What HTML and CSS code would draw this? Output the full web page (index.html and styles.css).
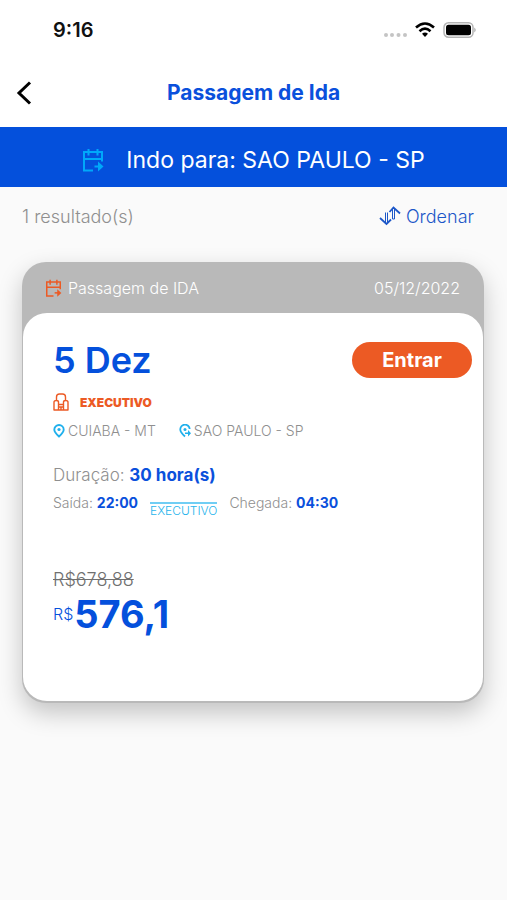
FILE: index.html
```html
<!DOCTYPE html>
<html lang="pt-BR">
<head>
<meta charset="utf-8">
<meta name="viewport" content="width=device-width, initial-scale=1">
<title>Passagem de Ida</title>
<link rel="stylesheet" href="styles.css">
</head>
<body>
<svg class="defs" aria-hidden="true">
  <symbol id="calendar" viewBox="0 0 22 24">
    <g fill="none" stroke="currentColor" stroke-width="2"><path d="M11 22.500H2V4h18v9.500M2 11h18M6.500 1v6.500M15.500 1v6.500"/><path d="M12.500 18.500H18"/></g>
    <path d="M16 13.500l5.500 5-5.500 5z" fill="currentColor"/>
  </symbol>
</svg>
<header class="top">
  <div class="status">
    <span class="clock">9:16</span>
    <div class="indicators">
      <svg width="24" height="6" viewBox="0 0 24 6" class="dots"><g fill="#c4c4c4"><circle cx="3" cy="3" r="2"/><circle cx="9" cy="3" r="2"/><circle cx="15.500" cy="3" r="2"/><circle cx="22" cy="3" r="2"/></g></svg>
      <svg width="20" height="16" viewBox="0 0 20 16"><g fill="none" stroke="#000" stroke-width="2.600"><path d="M1 5.500Q10-2.500 19 5.500"/><path d="M4.500 9.200Q10 4.200 15.500 9.200"/></g><path d="M7 11.800Q10 9.400 13 11.800L10 15z"/></svg>
      <svg width="34" height="16" viewBox="0 0 34 16"><rect x="1" y=".8" width="29" height="14.400" rx="4.500" fill="#fff" stroke="#b4b4b4" stroke-width="1.500"/><rect x="3" y="2.700" width="25" height="10.600" rx="2.500"/><path d="M31.500 5.500q2 2.500 0 5z" fill="#888"/></svg>
    </div>
  </div>
  <nav class="nav">
    <button class="back" type="button" aria-label="Voltar">
      <svg width="16" height="24" viewBox="0 0 16 24"><path d="M14 1.500L3 12l11 10.500" fill="none" stroke="#000" stroke-width="3"/></svg>
    </button>
    <h1>Passagem de Ida</h1>
  </nav>
</header>
<div class="banner">
  <svg width="22" height="24"><use href="#calendar"/></svg>
  <span>Indo para: SAO PAULO - SP</span>
</div>
<main>
  <div class="toolbar">
    <span class="count">1 resultado(s)</span>
    <button class="sort" type="button">
      <svg width="22" height="20" viewBox="0 0 22 20"><g fill="none" stroke="currentColor"><path d="M1 12l6.500 6 4.500-4.500M10.500 6l4-4.500L21 7.500" stroke-width="1.800"/><path d="M6.500 17V6.500M8.500 17V6.500M13.500 13V2.500M15.500 13V2.500M13.500 13h2" stroke-width="1"/></g></svg>
      Ordenar
    </button>
  </div>
  <article class="card">
    <div class="card-head">
      <svg width="17" height="18"><use href="#calendar"/></svg>
      <span>Passagem de IDA</span>
      <time datetime="2022-12-05">05/12/2022</time>
    </div>
    <div class="card-body">
      <div class="title-row">
        <h2>5 Dez</h2>
        <button class="enter" type="button">Entrar</button>
      </div>
      <div class="service">
        <svg width="16" height="18" viewBox="0 0 16 18"><g fill="none" stroke="currentColor" stroke-width="1.400" stroke-linejoin="round"><path d="M3.500 8V4q0-3 3-3h3q3 0 3 3v4M5.500 11.500V9q0-1.500-2.300-1.500T1 9.500V17h4.500zM10.500 11.500V9q0-1.500 2.300-1.500T15 9.500V17h-4.500zM5.500 11.500h5M5.500 14h5M8 14v3M5.500 17h5"/></g></svg>
        <strong>EXECUTIVO</strong>
      </div>
      <div class="places">
        <span class="place"><svg width="12" height="14" viewBox="0 0 12 14"><path d="M6 12.500C3 9.700 1.300 7.800 1.300 5.700a4.700 4.700 0 0 1 9.400 0C10.700 7.800 9 9.700 6 12.500z" fill="none" stroke="currentColor" stroke-width="1.900"/><circle cx="6" cy="5.500" r="1.600" fill="currentColor"/></svg>CUIABA - MT</span>
        <span class="place"><svg width="12" height="14" viewBox="0 0 12 14"><path d="M6 12.500C3 9.700 1.300 7.800 1.300 5.700a4.700 4.700 0 0 1 9.400-.7" fill="none" stroke="currentColor" stroke-width="1.800"/><circle cx="6" cy="5.500" r="1.500" fill="currentColor"/><path d="M6 8.500h3V6l3 3.200-3 3.200V10H6z" fill="currentColor"/></svg>SAO PAULO - SP</span>
      </div>
      <p class="duration">Duração: <strong>30 hora(s)</strong></p>
      <div class="times">
        <span>Saída: <strong>22:00</strong></span>
        <span class="class-line">EXECUTIVO</span>
        <span>Chegada: <strong>04:30</strong></span>
      </div>
      <s class="old-price">R$678,88</s>
      <p class="price"><span>R$</span><strong>576,1</strong></p>
    </div>
  </article>
</main>
</body>
</html>
```
FILE: styles.css
```css
* { box-sizing: border-box; }
body {
  margin: 0;
  min-height: 100vh;
  background: #fafafa;
  color: #8f8f8f;
  font-family: Inter, "Liberation Sans", sans-serif;
}
h1, h2, p { margin: 0; }
button { border: 0; padding: 0; background: none; font: inherit; }
svg { display: block; flex: none; }
.defs { position: absolute; width: 0; height: 0; }
.top { background: #fff; }
.status {
  display: flex;
  justify-content: space-between;
  align-items: center;
  height: 60px;
  padding: 0 30px 0 53px;
}
.clock { color: #111; font-size: 20px; font-weight: 600; }
.indicators { display: flex; align-items: center; gap: 8px; }
.dots { align-self: flex-end; }
.nav {
  display: grid;
  grid-template-columns: 1fr auto 1fr;
  align-items: center;
  height: 67px;
  padding: 0 16px 2px;
}
.nav h1 { color: #0a50dc; font-size: 21px; font-weight: 700; }
.back { justify-self: start; }
.banner {
  display: flex;
  justify-content: center;
  align-items: center;
  gap: 22px;
  height: 60px;
  padding-top: 6px;
  background: #0450dc;
  color: #fff;
  font-size: 23px;
}
.banner svg { color: #00a8fa; }
main { padding: 0 23px 0 22px; }
.toolbar {
  display: flex;
  justify-content: space-between;
  align-items: center;
  height: 58px;
  padding-right: 10px;
  font-size: 18px;
  font-weight: 300;
}
.sort { display: flex; align-items: center; gap: 5px; color: #1c57c8; }
.card {
  margin-top: 17px;
  padding: 0 1px 2px;
  border-radius: 24px;
  background: #b9b9b9;
  box-shadow: 0 10px 24px rgba(0, 0, 0, .22);
}
.card-head {
  display: flex;
  align-items: center;
  gap: 6px;
  height: 51px;
  padding: 0 23px 0 22px;
  color: #fff;
  font-size: 16px;
  font-weight: 300;
}
.card-head svg { color: #ec5a24; }
.card-head time { margin-left: auto; }
.card-body {
  min-height: 388px;
  padding: 26px 11px 24px 30px;
  border-radius: 24px;
  background: #fff;
}
.title-row { display: flex; justify-content: space-between; align-items: center; }
.title-row h2 { color: #0450dc; font-size: 36px; line-height: 42px; font-weight: 600; }
.enter {
  width: 120px;
  height: 36px;
  border-radius: 18px;
  background: #ec5a24;
  color: #fff;
  font-size: 20px;
  font-weight: 700;
}
.service {
  display: flex;
  align-items: center;
  gap: 11px;
  height: 18px;
  margin-top: 12px;
  color: #ec5a24;
  font-size: 12px;
}
.service strong { font-weight: 900; }
.places { display: flex; gap: 23px; margin-top: 11px; font-size: 14px; line-height: 18px; font-weight: 300; }
.place { display: flex; align-items: center; gap: 3px; }
.place svg { color: #20b0ec; }
.duration { margin-top: 23px; font-size: 17px; line-height: 24px; font-weight: 300; }
.duration strong, .times strong { color: #0a50dc; font-weight: 700; }
.times { display: flex; gap: 12px; margin-top: 6px; font-size: 14px; line-height: 20px; font-weight: 300; }
.class-line {
  margin-top: 9px;
  border-top: 2px solid #70cef4;
  color: #28b4ec;
  font-size: 12px;
  line-height: 14px;
}
.old-price { display: block; margin-top: 50px; color: #707070; font-size: 18px; line-height: 24px; font-weight: 300; }
.price { display: flex; align-items: center; gap: 1px; color: #0450dc; line-height: 44px; }
.price span { font-size: 16px; font-weight: 300; }
.price strong { font-size: 38px; font-weight: 700; }
```
